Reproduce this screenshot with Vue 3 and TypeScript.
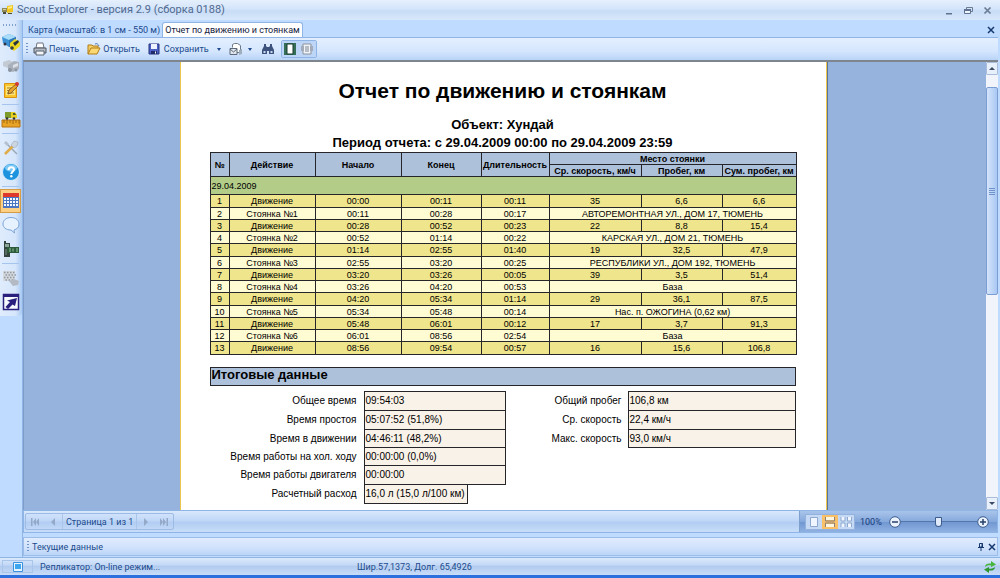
<script setup lang="ts">
import { ref } from 'vue'

interface Trip {
  action: string
  from: string
  to: string
  duration: string
  place?: string
  speed?: string
  run?: string
  total?: string
}

const trips: Trip[] = [
  { action: 'Движение', from: '00:00', to: '00:11', duration: '00:11', speed: '35', run: '6,6', total: '6,6' },
  { action: 'Стоянка №1', from: '00:11', to: '00:28', duration: '00:17', place: 'АВТОРЕМОНТНАЯ УЛ., ДОМ 17, ТЮМЕНЬ' },
  { action: 'Движение', from: '00:28', to: '00:52', duration: '00:23', speed: '22', run: '8,8', total: '15,4' },
  { action: 'Стоянка №2', from: '00:52', to: '01:14', duration: '00:22', place: 'КАРСКАЯ УЛ., ДОМ 21, ТЮМЕНЬ' },
  { action: 'Движение', from: '01:14', to: '02:55', duration: '01:40', speed: '19', run: '32,5', total: '47,9' },
  { action: 'Стоянка №3', from: '02:55', to: '03:20', duration: '00:25', place: 'РЕСПУБЛИКИ УЛ., ДОМ 192, ТЮМЕНЬ' },
  { action: 'Движение', from: '03:20', to: '03:26', duration: '00:05', speed: '39', run: '3,5', total: '51,4' },
  { action: 'Стоянка №4', from: '03:26', to: '04:20', duration: '00:53', place: 'База' },
  { action: 'Движение', from: '04:20', to: '05:34', duration: '01:14', speed: '29', run: '36,1', total: '87,5' },
  { action: 'Стоянка №5', from: '05:34', to: '05:48', duration: '00:14', place: 'Нас. п. ОЖОГИНА (0,62 км)' },
  { action: 'Движение', from: '05:48', to: '06:01', duration: '00:12', speed: '17', run: '3,7', total: '91,3' },
  { action: 'Стоянка №6', from: '06:01', to: '08:56', duration: '02:54', place: 'База' },
  { action: 'Движение', from: '08:56', to: '09:54', duration: '00:57', speed: '16', run: '15,6', total: '106,8' },
]

const times = [
  { label: 'Общее время', value: '09:54:03' },
  { label: 'Время простоя', value: '05:07:52 (51,8%)' },
  { label: 'Время в движении', value: '04:46:11 (48,2%)' },
  { label: 'Время работы на хол. ходу', value: '00:00:00 (0,0%)' },
  { label: 'Время работы двигателя', value: '00:00:00' },
  { label: 'Расчетный расход', value: '16,0 л (15,0 л/100 км)', short: true },
]

const runs = [
  { label: 'Общий пробег', value: '106,8 км' },
  { label: 'Ср. скорость', value: '22,4 км/ч' },
  { label: 'Макс. скорость', value: '93,0 км/ч' },
]

const zoom = ref(50)
</script>

<template>
  <div class="window">
    <header class="titlebar">
      <svg class="app-icon" width="12" height="12" viewBox="0 0 12 12">
        <path d="M0 4h5v4H0z" fill="#8d8a58" />
        <path d="M1 5h3v1H1z" fill="#d6d2a0" />
        <path d="M5 2l6-1v7l-6 1z" fill="#f2c61c" />
        <path d="M6 3l4-1v2l-4 1z" fill="#fbeb8a" />
        <path d="M1 8h3v2H1zM6 9h4v1H6z" fill="#4b4a3a" />
      </svg>
      <span class="title">Scout Explorer - версия 2.9 (сборка 0188)</span>
      <button class="win" aria-label="Свернуть">
        <svg width="9" height="9" viewBox="0 0 9 9"><path d="M1 7h6v1.500H1z" fill="#5f7390" /></svg>
      </button>
      <button class="win" aria-label="Развернуть">
        <svg width="9" height="9" viewBox="0 0 9 9"><path d="M2.500 3V1.500h6v4H7" fill="none" stroke="#6b7c94" /><path d="M.5 3.500h6v4h-6z" fill="#eef4fc" stroke="#5f7390" /><path d="M0 3h7v2H0z" fill="#5f7390" /></svg>
      </button>
      <button class="win" aria-label="Закрыть">
        <svg width="9" height="9" viewBox="0 0 9 9"><path d="M1.500 1.500l6 6M7.500 1.500l-6 6" stroke="#6b7c94" stroke-width="1.700" /></svg>
      </button>
    </header>

    <div class="body">
      <aside class="side">
        <div class="side-tools">
          <div class="side-grip"></div>
          <button aria-label="Объекты">
            <svg width="20" height="20" viewBox="0 0 20 20">
              <path d="M1 5l7-3 7 3v7l-7 3-6-4z" fill="#3d92d6" /><path d="M1 5l7-3 7 3-7 3z" fill="#a9dcf9" /><path d="M8 8l7-3v7l-7 3z" fill="#2f77b8" />
              <path d="M9 11l5-4 5 3v4l-6 5-4-3z" fill="#ecd81f" /><path d="M12 11l5-3 1 2-4 4z" fill="#26343f" /><circle cx="4" cy="12" r="1.500" fill="#334" /><circle cx="11" cy="16" r="1.800" fill="#36403c" />
            </svg>
          </button>
          <button aria-label="Группы">
            <svg width="20" height="20" viewBox="0 0 20 20">
              <path d="M2 6l6-2 4 2v4l-5 2-5-2z" fill="#c3cad3" /><path d="M7 9l6-4 5 1v7l-6 3-5-2z" fill="#a9b1bd" /><path d="M12 9l5-2v3l-5 2z" fill="#dde2e8" /><circle cx="9" cy="14" r="2" fill="#8b949f" /><circle cx="15" cy="14" r="1.500" fill="#8b949f" />
            </svg>
          </button>
          <button aria-label="Журнал">
            <svg width="20" height="20" viewBox="0 0 20 20">
              <path d="M3.500 3.500h12v14h-12z" fill="#fbc62c" stroke="#d99310" /><path d="M5 6h9v9H5z" fill="#fde37e" /><path d="M6 8h5M6 10.500h4M6 13h7" stroke="#ab7c1c" /><path d="M7 14l1-4 7-6 2 2-7 7z" fill="#e7a42c" stroke="#704b24" stroke-width=".8" /><circle cx="16" cy="4" r="2" fill="#d03a33" />
            </svg>
          </button>
          <i class="side-sep"></i>
          <button aria-label="Маршруты">
            <svg width="20" height="20" viewBox="0 0 20 20">
              <path d="M1 11h18v7H1z" fill="#e9a426" stroke="#b8720f" /><path d="M3 11v3M6 11v4M9 11v3M12 11v4M15 11v3M18 11v4" stroke="#8f5b10" stroke-width=".8" /><path d="M4 3h7v6H4z" fill="#7d9a2b" /><path d="M10 3h4l2 3v3h-6z" fill="#e6cf20" /><path d="M12 4h2l1 2h-3z" fill="#495b28" /><circle cx="6" cy="9.500" r="1.300" fill="#333" /><circle cx="13" cy="9.500" r="1.300" fill="#333" />
            </svg>
          </button>
          <i class="side-sep"></i>
          <button aria-label="Настройки">
            <svg width="20" height="20" viewBox="0 0 20 20">
              <path d="M5 5l11 11" stroke="#9aa8b8" stroke-width="1.500" /><path d="M3 5l2-2 3 3-2 2z" fill="#b4c0cd" /><path d="M4 16l8-8" stroke="#e0ab48" stroke-width="2.500" /><path d="M10 7l3-4 4 1-1 4-3 2z" fill="#cad5e1" stroke="#9cabbb" stroke-width=".6" />
            </svg>
          </button>
          <button aria-label="Справка">
            <svg width="20" height="20" viewBox="0 0 20 20">
              <circle cx="10" cy="10" r="8.500" fill="#1d93df" stroke="#d7ebfb" /><ellipse cx="10" cy="6" rx="6" ry="3.500" fill="#7cc9f5" /><path d="M7.500 8c0-4 5.500-3.500 5.500-.5 0 2-2.700 2-2.700 4.500" fill="none" stroke="#fff" stroke-width="2" /><circle cx="10.300" cy="14.300" r="1.200" fill="#fff" />
            </svg>
          </button>
          <i class="side-sep"></i>
          <button class="active" aria-label="Отчеты">
            <svg width="18" height="18" viewBox="0 0 18 18">
              <path d="M1 2h16v14H1z" fill="#4a76c4" /><path d="M1 1h16v4H1z" fill="#dd3a2c" /><path d="M2 6h2v2H2zM5 6h2v2H5zM8 6h2v2H8zM11 6h2v2h-2zM14 6h2v2h-2zM2 9h2v2H2zM5 9h2v2H5zM8 9h2v2H8zM11 9h2v2h-2zM14 9h2v2h-2zM2 12h2v2H2zM5 12h2v2H5zM8 12h2v2H8zM11 12h2v2h-2zM14 12h2v2h-2z" fill="#f4f8ff" />
            </svg>
          </button>
          <button aria-label="Сообщения">
            <svg width="20" height="20" viewBox="0 0 20 20"><path d="M10 2.500c5 0 8 3 8 6.500s-2 5-5 6l.5 3-3.500-3c-5 0-8-2.500-8-6s3-6.500 8-6.500z" fill="#e6f2ff" stroke="#7ba3d6" /></svg>
          </button>
          <button aria-label="SMS">
            <svg width="20" height="20" viewBox="0 0 20 20"><path d="M3 2h2v2h4v14H3z" fill="#34443f" /><path d="M4 5h4v3H4z" fill="#8aa79a" /><path d="M6 8h12v6H6z" fill="#2c5a3a" /><path d="M8 10h2M8 12h2M12 9.500v3M15 10h2M15 12h2" stroke="#8fc59a" /><path d="M4 11h2M4 13h2M4 15h2" stroke="#7c8d88" /></svg>
          </button>
          <i class="side-sep"></i>
          <button aria-label="Зоны">
            <svg width="20" height="20" viewBox="0 0 20 20"><path d="M2 3h12v10H2z" fill="#d5d9de" /><path d="M3 4.500h11M4.500 7h11M3 9.500h11M4.500 12h8" stroke="#8f979f" stroke-width="1.500" stroke-dasharray="1.500 1.500" /><path d="M8 13l5-2 5 2-1 4-5 1z" fill="#b3bac3" /></svg>
          </button>
          <button aria-label="Указатель">
            <svg width="18" height="18" viewBox="0 0 18 18"><path d="M1.500 1.500h15v15h-15z" fill="#f7faff" stroke="#28207c" stroke-width="1.500" /><path d="M1 1h16v3H1z" fill="#28207c" /><path d="M15 5l-2 8-2.500-1.500L6 16l-2.500-2L8 9 5 7.500z" fill="#28207c" /></svg>
          </button>
        </div>
      </aside>

      <main class="main">
        <nav class="tabs">
          <button class="tab">Карта (масштаб: в 1 см - 550 м)</button>
          <button class="tab current">Отчет по движению и стоянкам</button>
          <button class="tab-close" aria-label="Закрыть вкладку">
            <svg width="8" height="8" viewBox="0 0 8 8"><path d="M1 1l6 6M7 1L1 7" stroke="#16386f" stroke-width="1.500" /></svg>
          </button>
        </nav>

        <div class="toolbar">
          <i class="grip"></i>
          <button class="tool">
            <svg width="14" height="14" viewBox="0 0 14 14"><path d="M4 1h6l1 5H3z" fill="#fff" stroke="#6c7480" /><path d="M1 6h12v5H1z" fill="#b4bac4" stroke="#4c545f" /><path d="M3 9h8v4H3z" fill="#f3f5f8" stroke="#5b6470" /></svg>
            Печать
          </button>
          <button class="tool open">
            <svg width="14" height="14" viewBox="0 0 14 14"><path d="M1 12V3h4l1 1h5v3" fill="#f4cf66" stroke="#b27c17" /><path d="M1 12l3-6h9l-3 6z" fill="#fbd873" stroke="#b27c17" /><path d="M8 2c2-1 3 0 4 2" stroke="#4c76b8" fill="none" /></svg>
            Открыть
          </button>
          <button class="tool save">
            <svg width="12" height="12" viewBox="0 0 12 12"><path d="M1 1h10v10H1z" fill="#4c5fc4" stroke="#27317e" /><path d="M3 1h6v5H3z" fill="#eef2ff" /><path d="M3 8h6v3H3z" fill="#1f2a66" /><path d="M7 8.500h1v2H7z" fill="#fff" /></svg>
            Сохранить
          </button>
          <button class="drop" aria-label="Форматы"><i></i></button>
          <button class="tool mail" aria-label="Отправить">
            <svg width="14" height="14" viewBox="0 0 14 14"><path d="M3.500 5.500v-3l2-1h3l3 2v7h-4" fill="#fff" stroke="#6d7888" /><path d="M1 6.500h7v6H1z" fill="#dfe6ef" stroke="#5d6878" /><path d="M1 7l3.500 3L8 7" fill="none" stroke="#5d6878" /><path d="M10 8l3-1v5l-3 1z" fill="#9faebf" /></svg>
          </button>
          <button class="drop narrow" aria-label="Варианты отправки"><i></i></button>
          <button class="tool find" aria-label="Найти">
            <svg width="14" height="12" viewBox="0 0 14 12"><path d="M3 1h2v2l1 1h2l1-1V1h2v2l2 4v4H8V8H6v3H1V7l2-4z" fill="#3d527d" /><path d="M2.500 8h2v2h-2zM9.500 8h2v2h-2z" fill="#cad8f0" /></svg>
          </button>
          <div class="toggles">
            <button aria-label="Одна страница">
              <svg width="14" height="14" viewBox="0 0 14 14"><path d="M1 1h12v12H1z" fill="#356f58" /><path d="M4 2h6v10H4z" fill="#fff" stroke="#183c2e" /></svg>
            </button>
            <button aria-label="Несколько страниц">
              <svg width="14" height="14" viewBox="0 0 14 14"><path d="M3 2h8v10H3z" fill="#f0f3f7" stroke="#8b939e" /><path d="M1 4h3v5H1zM10 4h3v5h-3z" fill="#a2abb7" /><path d="M5 5h4M5 7h4M5 9h4" stroke="#7d8793" /></svg>
            </button>
          </div>
        </div>

        <div class="workspace">
          <div class="canvas">
            <article class="sheet">
              <h1>Отчет по движению и стоянкам</h1>
              <h2>Объект: Хундай</h2>
              <h2>Период отчета: с 29.04.2009 00:00 по 29.04.2009 23:59</h2>

              <table class="report">
                <colgroup>
                  <col class="c-num"><col class="c-wide"><col class="c-wide"><col class="c-end">
                  <col class="c-dur"><col class="c-speed"><col class="c-run"><col class="c-total">
                </colgroup>
                <thead>
                  <tr>
                    <th rowspan="2">№</th>
                    <th rowspan="2">Действие</th>
                    <th rowspan="2">Начало</th>
                    <th rowspan="2">Конец</th>
                    <th rowspan="2">Длительность</th>
                    <th colspan="3">Место стоянки</th>
                  </tr>
                  <tr>
                    <th>Ср. скорость, км/ч</th>
                    <th>Пробег, км</th>
                    <th>Сум. пробег, км</th>
                  </tr>
                  <tr class="day"><td colspan="8">29.04.2009</td></tr>
                </thead>
                <tbody>
                  <tr v-for="(t, i) in trips" :key="i" :class="{ stop: t.place }">
                    <td>{{ i + 1 }}</td>
                    <td>{{ t.action }}</td>
                    <td>{{ t.from }}</td>
                    <td>{{ t.to }}</td>
                    <td>{{ t.duration }}</td>
                    <td v-if="t.place" colspan="3">{{ t.place }}</td>
                    <template v-else>
                      <td>{{ t.speed }}</td>
                      <td>{{ t.run }}</td>
                      <td>{{ t.total }}</td>
                    </template>
                  </tr>
                </tbody>
              </table>

              <h3>Итоговые данные</h3>
              <div class="totals">
                <dl class="times">
                  <template v-for="r in times" :key="r.label">
                    <dt>{{ r.label }}</dt>
                    <dd :class="{ short: r.short }">{{ r.value }}</dd>
                  </template>
                </dl>
                <dl class="runs">
                  <template v-for="r in runs" :key="r.label">
                    <dt>{{ r.label }}</dt>
                    <dd>{{ r.value }}</dd>
                  </template>
                </dl>
              </div>
            </article>
          </div>
          <div class="scroll">
            <button class="arrow up" aria-label="Вверх"><i></i></button>
            <div class="thumb"><i></i></div>
            <button class="arrow down" aria-label="Вниз"><i></i></button>
          </div>
        </div>

        <div class="pager">
          <div class="pages">
            <button aria-label="Первая страница"><svg width="10" height="10" viewBox="0 0 10 10"><path d="M1 1h1.500v8H1zM6 1v8L3 5zM9 1v8L6 5z" fill="#94a9c8" /></svg></button>
            <button aria-label="Предыдущая страница"><svg width="10" height="10" viewBox="0 0 10 10"><path d="M7 1v8L3 5z" fill="#94a9c8" /></svg></button>
            <span class="page">Страница 1 из 1</span>
            <button aria-label="Следующая страница"><svg width="10" height="10" viewBox="0 0 10 10"><path d="M3 1v8l4-4z" fill="#94a9c8" /></svg></button>
            <button aria-label="Последняя страница"><svg width="10" height="10" viewBox="0 0 10 10"><path d="M7.500 1H9v8H7.500zM1 1v8l3-4zM4 1v8l3-4z" fill="#94a9c8" /></svg></button>
          </div>
          <div class="zoombar">
            <div class="views">
              <button aria-label="Страница"><svg width="12" height="12" viewBox="0 0 12 12"><path d="M2.500 1.500h7v9h-7z" fill="#f0f6ff" stroke="#8da8cf" /></svg></button>
              <button class="on" aria-label="По ширине"><svg width="12" height="12" viewBox="0 0 12 12"><path d="M2 1h8v3H2zM2 8h8v3H2z" fill="#fff6df" /><path d="M1.500 1v4h9V1M1.500 11V7h9v4" fill="none" stroke="#8c8078" /></svg></button>
              <button aria-label="Разворот"><svg width="12" height="12" viewBox="0 0 12 12"><path d="M1 1v4h4V1M1 11V7h4v4M7.500 1v4h4V1M7.500 11V7h4v4" fill="#f0f6ff" stroke="#8da8cf" /></svg></button>
            </div>
            <label for="zoom">100%</label>
            <button class="round" aria-label="Уменьшить"><svg width="12" height="12" viewBox="0 0 12 12"><circle cx="6" cy="6" r="5.300" fill="#eaf2fd" stroke="#3d5c8d" /><path d="M3 6h6" stroke="#27406b" stroke-width="1.500" /></svg></button>
            <input id="zoom" v-model="zoom" type="range" min="0" max="100">
            <button class="round" aria-label="Увеличить"><svg width="12" height="12" viewBox="0 0 12 12"><circle cx="6" cy="6" r="5.300" fill="#eaf2fd" stroke="#3d5c8d" /><path d="M3 6h6M6 3v6" stroke="#27406b" stroke-width="1.500" /></svg></button>
          </div>
        </div>

        <div class="dock">
          <i class="grip"></i>
          <span>Текущие данные</span>
          <button aria-label="Закрепить"><svg width="8" height="8" viewBox="0 0 8 8"><path d="M2.500 0.500h3V4h-3z" fill="none" stroke="#16386f" /><path d="M5 0v4M1 4.500h6M4 5v3" stroke="#16386f" /></svg></button>
          <button aria-label="Закрыть панель"><svg width="8" height="8" viewBox="0 0 8 8"><path d="M1 1l6 6M7 1L1 7" stroke="#16386f" stroke-width="1.500" /></svg></button>
        </div>
      </main>
    </div>

    <footer class="status">
      <button class="state" aria-label="Состояние"><svg width="10" height="10" viewBox="0 0 10 10"><path d="M.5 .5h9v9h-9z" fill="#e6f5ff" stroke="#3c92dc" /><path d="M2 2h6v5H2z" fill="#3ea6ee" /></svg></button>
      <span class="replica">Репликатор: On-line режим...</span>
      <span class="coords">Шир.57,1373, Долг. 65,4926</span>
      <svg class="sync" width="12" height="12" viewBox="0 0 12 12"><path d="M1 6c0-3 3-4 6-3.500L7 0l5 3.500L7 6V4.500C4.500 4 3 4.500 1 6z" fill="#46b53c" /><path d="M11 6c0 3-3 4-6 3.500L5 12 0 8.500 5 6v1.500c2.500.5 4 0 6-1.500z" fill="#2d962e" /></svg>
    </footer>
    <div class="desk"></div>
  </div>
</template>

<style>
html,
body {
  margin: 0;
  background: #bfdbff;
}
</style>

<style scoped>
.window {
  display: flex;
  flex-direction: column;
  min-height: 100vh;
  background: #bfdbff;
  color: #204a8c;
  font: 9px/12px Roboto, "DejaVu Sans Condensed", sans-serif;
}
*,
*::before {
  box-sizing: border-box;
}
button {
  display: flex;
  align-items: center;
  justify-content: center;
  margin: 0;
  padding: 0;
  border: 0;
  background: none;
  color: inherit;
  font: inherit;
  white-space: nowrap;
}
svg {
  flex: none;
  display: block;
}

/* Title bar */
.titlebar {
  display: flex;
  align-items: center;
  gap: 3px;
  height: 20px;
  padding: 0 5px 0 2px;
  background: linear-gradient(#e6f0fd, #d3e4fa 45%, #c8dcf6 55%, #d9e8fb);
  color: #4f6990;
  font-size: 11px;
}
.title {
  flex: 1;
}
.win {
  width: 16px;
  height: 16px;
}

/* Side tools */
.body {
  display: flex;
  flex: 1;
}
.side {
  width: 23px;
  border-right: 1px solid #8fb4e6;
}
.side-tools {
  padding: 10px 1px 2px 0;
  border-radius: 0 0 4px 0;
  background: linear-gradient(90deg, #dfecfd, #d6e6fb 70%, #a9c9f2);
}
.side-tools button {
  width: 21px;
  height: 24px;
}
.side-tools .active {
  border: 1px solid #d59c45;
  background: #fbd084;
}
.side-grip {
  height: 2px;
  margin: -6px 4px 4px 3px;
  background: repeating-linear-gradient(90deg, #7f9fcd 0 1px, transparent 1px 3px);
}
.side-sep {
  display: block;
  height: 1px;
  margin: 2px 2px;
  background: #a6c5ee;
}

/* Tabs */
.main {
  display: flex;
  flex: 1;
  flex-direction: column;
  min-width: 0;
  padding-right: 2px;
}
.tabs {
  display: flex;
  align-items: flex-end;
  height: 18px;
  border-bottom: 1px solid #8fb4e6;
}
.tab {
  height: 15px;
  padding: 0 2px 0 5px;
}
.tab.current {
  border: 1px solid #8fb4e6;
  border-bottom: 0;
  border-radius: 3px 3px 0 0;
  background: #fff;
  color: #14213d;
  padding: 0 2px;
}
.tab-close {
  width: 14px;
  height: 14px;
  margin-left: auto;
}

/* Toolbar */
.toolbar {
  display: flex;
  align-items: center;
  height: 22px;
  padding-left: 3px;
  background: linear-gradient(#e3efff, #d5e6fd 60%, #b9d4f8);
}
.grip {
  flex: none;
  width: 2px;
  height: 12px;
  background: repeating-linear-gradient(#6f93c8 0 1px, transparent 1px 3px);
}
.tool {
  gap: 2px;
  margin-left: 5px;
}
.tool.open,
.tool.save {
  margin-left: 8px;
}
.tool.save {
  gap: 4px;
}
.drop {
  width: 20px;
  height: 16px;
}
.drop.narrow {
  width: 14px;
}
.drop i,
.arrow i {
  width: 0;
  border: solid transparent;
  border-width: 3px 3px 0;
  border-top-color: #204a8c;
}
.drop i {
  border-width: 3px 2px 0;
}
.tool.mail,
.tool.find {
  margin-left: 0;
}
.tool.find {
  margin-left: 4px;
}
.toggles {
  display: flex;
  margin-left: 6px;
  border: 1px solid #8fb4e6;
  border-radius: 2px;
}
.toggles button {
  width: 17px;
  height: 16px;
  background: #bdd5f6;
}

/* Report viewer */
.workspace {
  display: flex;
  flex: 1;
  border-top: 2px solid #7f858d;
  border-left: 1px solid #7f9cc9;
  background: #96b3dd;
}
.canvas {
  display: flex;
  flex: 1;
  justify-content: center;
  min-width: 0;
  padding-right: 4px;
}
.sheet {
  width: 100%;
  max-width: 647px;
  padding: 17px 30px 6px 29px;
  border: solid #ecc64a;
  border-width: 0 1px;
  box-shadow: 1px 0 #5e7398;
  background: #fff;
  color: #000;
  font-family: "Liberation Sans", Arial, sans-serif;
}
h1,
h2,
h3,
dl,
dd {
  margin: 0;
}
h1 {
  margin-bottom: 13px;
  font-size: 21px;
  line-height: 24px;
  text-align: center;
}
h2 {
  font-size: 13px;
  line-height: 18px;
  text-align: center;
}
.report {
  width: 100%;
  border-collapse: collapse;
  table-layout: fixed;
  font-size: 9px;
  line-height: 10px;
  text-align: center;
}
.c-num { width: 19px; }
.c-wide { width: 86px; }
.c-end { width: 80px; }
.c-dur { width: 68px; }
.c-speed { width: 92px; }
.c-run { width: 81px; }
.c-total { width: 74px; }
.report th,
.report td {
  height: 12px;
  padding: 0;
  border: 1px solid #26262a;
  white-space: nowrap;
}
.report th {
  background: #adc1da;
}
.report .day td {
  height: 18px;
  padding-left: 1px;
  background: #b3cd88;
  text-align: left;
}
.report tbody td {
  background: #efe58c;
}
.report tbody .stop td {
  background: #fffbd2;
}
.report tbody tr:nth-child(4n + 1) td {
  height: 13px;
}
h3 {
  height: 19px;
  margin-top: 12px;
  padding-left: 1px;
  border: 1px solid #26262a;
  background: #adc1da;
  font-size: 13px;
  line-height: 14px;
}
.totals {
  display: flex;
  justify-content: space-between;
  align-items: flex-start;
  margin-top: 5px;
  font-size: 10px;
}
dl {
  display: grid;
  grid-auto-rows: 19px 19px 18px 18px 19px 19px;
  line-height: 20px;
}
.times {
  grid-template-columns: 147px 142px;
  column-gap: 7px;
}
.runs {
  grid-template-columns: 74px 168px;
  column-gap: 6px;
}
dt {
  text-align: right;
  white-space: nowrap;
}
dd {
  margin-bottom: -1px;
  padding-left: 1px;
  border: 1px solid #26262a;
  background: #f9f2e8;
  line-height: 18px;
  white-space: nowrap;
}
dd.short {
  justify-self: start;
  padding-right: 2px;
}

/* Scroll bar */
.scroll {
  display: flex;
  flex-direction: column;
  width: 12px;
  background: #f1f4fa;
}
.arrow {
  height: 13px;
  border: 1px solid #a9bddb;
  border-radius: 1px;
  background: #e8f0fc;
}
.arrow.up i {
  border-width: 0 3px 3px;
  border-color: transparent transparent #3d4a63;
}
.arrow.down {
  margin-top: auto;
}
.arrow.down i {
  border-top-color: #3d4a63;
}
.thumb {
  display: flex;
  align-items: center;
  justify-content: center;
  height: 208px;
  margin-top: 12px;
  border: 1px solid #7b9dd2;
  border-radius: 2px;
  background: linear-gradient(90deg, #d4e4fb, #a9c8f3);
}
.thumb i {
  width: 6px;
  height: 7px;
  background: repeating-linear-gradient(#6f93c8 0 1px, transparent 1px 2px);
}

/* Pager and zoom */
.pager {
  display: flex;
  justify-content: space-between;
  height: 23px;
  border: 1px solid #8fb4e6;
  background: linear-gradient(#d9e8fc, #c0d7f7 45%, #b2cdf2 55%, #c8ddf9);
}
.pages {
  display: flex;
  margin: 2px 1px;
  border: 1px solid #9dbbe4;
  border-radius: 2px;
}
.pages button {
  width: 18px;
}
.page {
  padding: 0 3px;
  border: solid #a9c5ea;
  border-width: 0 1px;
  line-height: 16px;
  white-space: nowrap;
}
.zoombar {
  display: flex;
  align-items: center;
  width: 198px;
  padding: 0 8px 0 5px;
  border-left: 1px solid #7f9fcf;
  background: linear-gradient(#a9c4ea, #85a9dc 50%, #7298d2 55%, #8fb1e2);
}
.views {
  display: flex;
  border: 1px solid #93b2de;
  background: #c5d9f4;
}
.views button {
  width: 16px;
  height: 14px;
}
.views .on {
  background: #f9c067;
}
.zoombar label {
  flex: none;
  margin: 0 7px 0 5px;
  color: #17397a;
}
.zoombar input {
  flex: 1;
  min-width: 0;
  height: 12px;
  margin: 0;
  appearance: none;
  background: linear-gradient(#5576ab, #5576ab) center / 100% 1px no-repeat;
}
.zoombar input::-webkit-slider-thumb {
  appearance: none;
  width: 7px;
  height: 10px;
  border: 1px solid #3d5c8d;
  border-radius: 1px 1px 4px 4px;
  background: #dfeafa;
}

/* Docked panel */
.dock {
  display: flex;
  align-items: center;
  height: 19px;
  margin: 4px 0 1px;
  padding: 0 0 0 3px;
  border: 1px solid #9dbde9;
  background: linear-gradient(#e0ecfe, #cfe1fb 60%, #bad4f8);
}
.dock span {
  flex: 1;
  padding-left: 3px;
}
.dock button {
  width: 11px;
  height: 14px;
}

/* Status bar */
.status {
  display: flex;
  align-items: center;
  height: 18px;
  padding: 0 4px 0 2px;
  border-top: 1px solid #8fb4e6;
  background: linear-gradient(#dbe9fc, #c4d9f6 40%, #b1cbef 50%, #c9ddf8);
}
.state {
  width: 31px;
  height: 13px;
  border: 1px solid #a9c5ea;
}
.replica {
  flex: none;
  width: 324px;
  padding-left: 7px;
}
.sync {
  margin-left: auto;
}
.desk {
  height: 3px;
  background: #2b70dc;
}
</style>
